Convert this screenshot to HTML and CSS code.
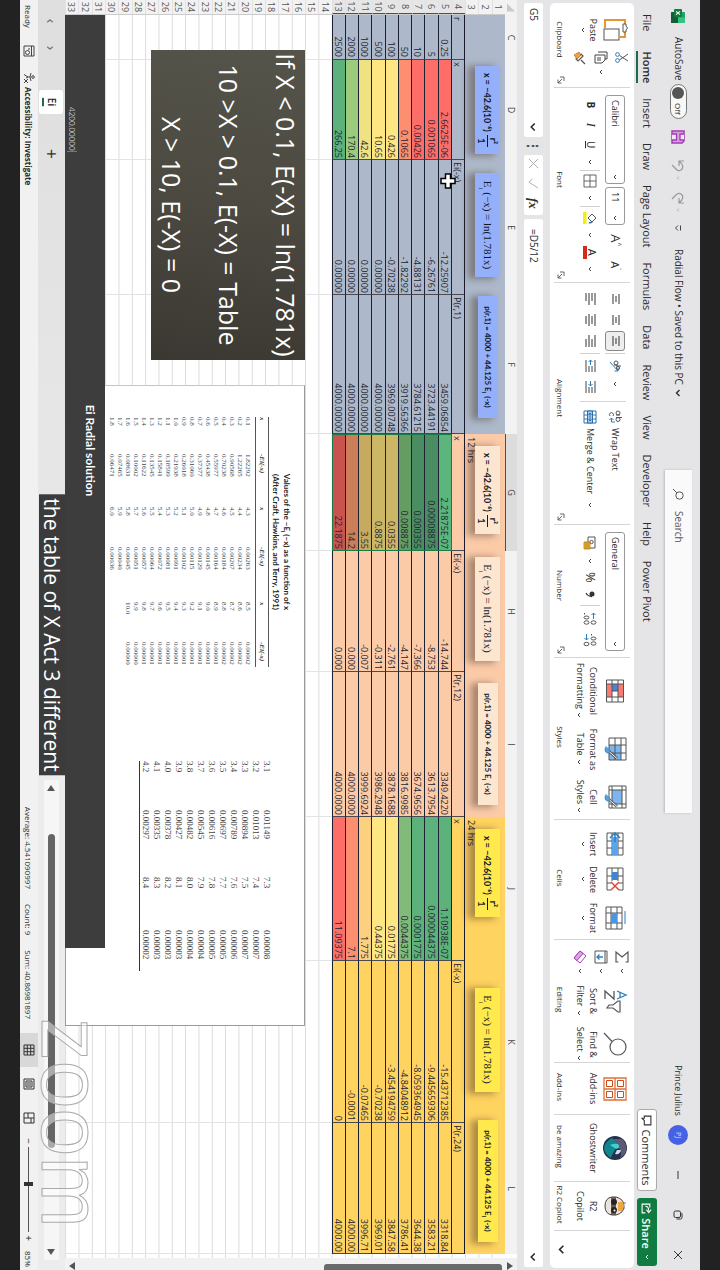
FILE: index.html
```html
<!DOCTYPE html>
<html lang="en">
<head>
<meta charset="utf-8">
<title>Radial Flow</title>
<link rel="stylesheet" href="styles.css">
</head>
<body>
<svg class="defs" aria-hidden="true">
  <symbol id="chev" viewBox="0 0 8 8"><path d="M2 3 4 5 6 3" fill="none" stroke="currentColor" stroke-width=".9"/></symbol>
  <symbol id="launch" viewBox="0 0 8 8"><path d="M1 5V1H5M3 3 7 7M7 3.500V7H3.500" fill="none" stroke="#555" stroke-width=".9"/></symbol>
  <symbol id="lines-a" viewBox="0 0 14 14"><path d="M2 3H12M4 6H10M2 9H12" stroke="#444" stroke-width="1.100"/></symbol>
  <symbol id="lines-l" viewBox="0 0 14 14"><path d="M1 2H13M1 5H9M1 8H13M1 11H9" stroke="#444" stroke-width="1.100"/></symbol>
  <symbol id="lines-c" viewBox="0 0 14 14"><path d="M1 2H13M3 5H11M1 8H13M3 11H11" stroke="#444" stroke-width="1.100"/></symbol>
  <symbol id="lines-r" viewBox="0 0 14 14"><path d="M1 2H13M5 5H13M1 8H13M5 11H13" stroke="#444" stroke-width="1.100"/></symbol>
  <symbol id="brush" viewBox="0 0 14 14"><path d="M13 1 6 9" stroke="#555" stroke-width="2.600"/><path d="M13 1 6 9" stroke="#fff" stroke-width="1"/><path d="M6 8C3 8 3 11 1 12 4 14 8 13 7.500 9.500Z" fill="#5aa0dc" stroke="#2a6ea8" stroke-width=".6"/></symbol>
</svg>
<div class="screen">
<div class="stage">
  <div class="strip"></div>

  <header class="titlebar">
    <svg class="app" viewBox="0 0 14 14"><rect x="3" width="11" height="14" rx="1" fill="#21a366"/><path d="M8.500 0H13a1 1 0 0 1 1 1V7H8.500Z" fill="#33c481"/><path d="M3 7H14V14H4a1 1 0 0 1-1-1Z" fill="#185c37"/><rect y="3" width="8" height="8" rx="1" fill="#107c41"/><path d="M2.300 5 5.700 9M5.700 5 2.300 9" stroke="#fff" stroke-width="1.100"/></svg>
    <label for="autosave" class="autosave">AutoSave</label>
    <span class="toggle"><input type="checkbox" id="autosave"><span>Off</span></span>
    <button class="save" aria-label="Save"><svg viewBox="0 0 14 14"><path d="M1 1H11L13 3V13H1Z" fill="#d9a0e0" stroke="#a13cb4" stroke-width="1.500"/><path d="M4 1V5H10V1M4 13V8.500H10V13" fill="#f4eaf6" stroke="#a13cb4" stroke-width="1.300"/></svg></button>
    <button class="undo" aria-label="Undo"><svg viewBox="0 0 14 14"><path d="M2 1V6H7M2 6C5 2 9 1 11 4S10 9 6 13" fill="none" stroke="#999" stroke-width="1.200"/></svg><svg class="c"><use href="#chev"/></svg></button>
    <button class="undo" aria-label="Redo"><svg viewBox="0 0 14 14"><path d="M12 1V6H7M12 6C9 2 5 1 3 4S4 9 8 13" fill="none" stroke="#999" stroke-width="1.200"/></svg><svg class="c"><use href="#chev"/></svg></button>
    <button class="more" aria-label="Customize toolbar"><svg viewBox="0 0 8 8"><path d="M1.500 1.500H6.500M1.500 4 4 6.500 6.500 4" fill="none" stroke="#444"/></svg></button>
    <button class="doc">Radial Flow • Saved to this PC <svg class="c"><use href="#chev"/></svg></button>
    <label class="search"><svg viewBox="0 0 12 12"><circle cx="7.500" cy="4.500" r="3.700" fill="none" stroke="#555"/><path d="M4.800 7.200 1 11" stroke="#555"/></svg><input type="search" placeholder="Search" aria-label="Search"></label>
    <span class="user">Prince Julius</span><span class="avatar">PJ</span>
    <button class="win" aria-label="Minimize"><svg viewBox="0 0 10 10"><path d="M1 5H9" stroke="#333"/></svg></button>
    <button class="win" aria-label="Restore"><svg viewBox="0 0 10 10"><rect x="1" y="2.500" width="6.500" height="6.500" rx="1.500" fill="none" stroke="#333"/><path d="M3 1.500Q3 1 4 1H7.500Q9 1 9 2.500V6.500" fill="none" stroke="#333"/></svg></button>
    <button class="win" aria-label="Close"><svg viewBox="0 0 10 10"><path d="M1 1 9 9M9 1 1 9" stroke="#333"/></svg></button>
  </header>

  <nav class="tabs">
    <a href="#">File</a><a href="#" class="on">Home</a><a href="#">Insert</a><a href="#">Draw</a><a href="#">Page Layout</a><a href="#">Formulas</a><a href="#">Data</a><a href="#">Review</a><a href="#">View</a><a href="#">Developer</a><a href="#">Help</a><a href="#">Power Pivot</a>
    <button class="comments"><svg viewBox="0 0 10 10"><path d="M1 1H9V7H5L3 9V7H1Z" fill="none" stroke="#333"/></svg>Comments</button>
    <button class="share"><svg viewBox="0 0 10 10"><path d="M4 2H1V9H9V6M3 6C3 4 5 3 7 3M6 .8 8.800 3 6 5" fill="none" stroke="#fff"/></svg>Share<svg class="c"><use href="#chev"/></svg></button>
  </nav>

  <section class="ribbon">
    <div class="group">
      <div class="tools clip">
        <button class="big"><svg viewBox="0 0 24 26"><path d="M6 3H2V23H10M14 3H19V8" fill="none" stroke="#e8952e" stroke-width="2"/><path d="M6 5V2H8Q10-1 12 2H14V5Z" fill="#fff" stroke="#555"/><rect x="11" y="9" width="11" height="15" fill="#fff" stroke="#555"/></svg><span>Paste</span><svg class="c"><use href="#chev"/></svg></button>
        <div class="stack">
          <button aria-label="Cut"><svg viewBox="0 0 14 14"><path d="M3 1 9 9.500M10 1 4.500 9.500" stroke="#555"/><circle cx="3.500" cy="11.500" r="1.900" fill="none" stroke="#2a7fc0"/><circle cx="9.500" cy="11.500" r="1.900" fill="none" stroke="#2a7fc0"/></svg></button>
          <button aria-label="Copy"><svg viewBox="0 0 14 14"><path d="M1 10V1H8V3" fill="none" stroke="#444"/><path d="M4 3H9L12 6V13H4Z" fill="#fff" stroke="#444"/><path d="M6 8H10M6 10H10" stroke="#444"/></svg><svg class="c"><use href="#chev"/></svg></button>
          <button aria-label="Format Painter"><svg viewBox="0 0 14 14"><path d="M13 2 9 6M5 4 10 9 8 11 3 6Z" fill="#fff" stroke="#555" stroke-width="1.200"/><path d="M4 6 8 10 4 13 1 8Z" fill="#f0a040" stroke="#a8620f" stroke-width=".6"/></svg></button>
        </div>
      </div>
      <footer><span>Clipboard</span><svg><use href="#launch"/></svg></footer>
    </div>
    <div class="group">
      <div class="tools rows">
        <div class="row font1"><span class="pick name"><select aria-label="Font"><option>Calibri</option></select><svg class="c"><use href="#chev"/></svg></span><span class="pick size"><select aria-label="Font size"><option>11</option></select><svg class="c"><use href="#chev"/></svg></span><button class="grow">A<sup>^</sup></button><button class="grow sm">A<sup>˅</sup></button></div>
        <div class="row font2"><button class="b">B</button><button class="i">I</button><button class="u">U</button><svg class="c"><use href="#chev"/></svg><hr>
          <button aria-label="Borders"><svg viewBox="0 0 14 14"><path d="M1 1H13V13H1ZM7 1V13M1 7H13" fill="none" stroke="#666"/></svg></button><svg class="c"><use href="#chev"/></svg><hr>
          <button aria-label="Fill color"><svg viewBox="0 0 14 14"><path d="M3 5 7 1 11 5 7 9Z" fill="#fff" stroke="#555"/><path d="M11 4Q13.500 7 12 8.500 10 8 11 4" fill="#2a6ea8"/><path d="M1 10.500H13V14H1Z" fill="#f4ee10"/></svg></button><svg class="c"><use href="#chev"/></svg>
          <button aria-label="Font color"><span class="ink">A</span></button><svg class="c"><use href="#chev"/></svg></div>
      </div>
      <footer><span>Font</span><svg><use href="#launch"/></svg></footer>
    </div>
    <div class="group">
      <div class="tools split">
        <div class="rows">
          <div class="row"><button aria-label="Top"><svg><use href="#lines-a"/></svg></button><button aria-label="Middle"><svg><use href="#lines-a"/></svg></button><button class="boxed" aria-label="Bottom"><svg><use href="#lines-a"/></svg></button><hr><button aria-label="Orientation"><svg viewBox="0 0 14 14"><path d="M3 12 12 4M12 7.500V4H8.500" fill="none" stroke="#2a7fc0"/><circle cx="4" cy="6" r="2" fill="none" stroke="#555"/><path d="M6 4V8M7 1V6" stroke="#555"/><circle cx="9" cy="4" r="1.600" fill="none" stroke="#555"/></svg></button><svg class="c"><use href="#chev"/></svg></div>
          <div class="row"><button aria-label="Left"><svg><use href="#lines-l"/></svg></button><button aria-label="Center"><svg><use href="#lines-c"/></svg></button><button aria-label="Right"><svg><use href="#lines-r"/></svg></button><hr><button aria-label="Outdent"><svg viewBox="0 0 14 14"><path d="M1 2H13M7 5H13M7 8H13M1 11H13" stroke="#444"/><path d="M6 6.500H1M3 4.500 1 6.500 3 8.500" fill="none" stroke="#2a7fc0"/></svg></button><button aria-label="Indent"><svg viewBox="0 0 14 14"><path d="M1 2H13M7 5H13M7 8H13M1 11H13" stroke="#444"/><path d="M1 6.500H6M4 4.500 6 6.500 4 8.500" fill="none" stroke="#2a7fc0"/></svg></button></div>
        </div>
        <div class="rows wrap">
          <div class="row"><button class="text"><svg viewBox="0 0 14 14"><circle cx="3" cy="4" r="2" fill="none" stroke="#555"/><path d="M5 2V6M7.500 0V6M6 9A2 2 0 1 0 6 12" fill="none" stroke="#555"/><circle cx="9.500" cy="4" r="2" fill="none" stroke="#555"/><path d="M12 7V10.500H8M10 8.500 8 10.500 10 12.500" fill="none" stroke="#2a7fc0"/></svg>Wrap Text</button></div>
          <div class="row"><button class="text"><svg viewBox="0 0 14 14"><path d="M1 1H13V13H1Z" fill="#fff" stroke="#2a6ea8"/><path d="M1 4.500H13V9.500H1Z" fill="#9fcdf2" stroke="#2a6ea8"/><path d="M5 1V4M9 1V4M5 10V13M9 10V13M3 7H11M5 5.500 3 7 5 8.500M9 5.500 11 7 9 8.500" fill="none" stroke="#2a6ea8" stroke-width=".9"/></svg>Merge &amp; Center</button><svg class="c"><use href="#chev"/></svg></div>
        </div>
      </div>
      <footer><span>Alignment</span><svg><use href="#launch"/></svg></footer>
    </div>
    <div class="group">
      <div class="tools rows">
        <div class="row"><span class="pick wide"><select aria-label="Number format"><option>General</option></select><svg class="c"><use href="#chev"/></svg></span></div>
        <div class="row num"><button aria-label="Accounting"><svg viewBox="0 0 14 14"><path d="M1 2H12V9H1Z" fill="#fff" stroke="#555"/><circle cx="6" cy="5.500" r="1.700" fill="none" stroke="#555"/><path d="M6 7H13V13H6Z" fill="#f2b233" stroke="#a8720f" stroke-width=".7"/><path d="M6 9H13M6 11H13" stroke="#a8720f" stroke-width=".7"/></svg></button><svg class="c"><use href="#chev"/></svg><button class="pct">%</button><button aria-label="Comma style"><svg class="comma" viewBox="0 0 8 14"><circle cx="4" cy="5" r="2.500" fill="#333"/><path d="M6.500 5Q6.500 9 3 11" fill="none" stroke="#333" stroke-width="1.300"/></svg></button><hr>
          <button aria-label="Increase decimal"><svg viewBox="0 0 14 14"><path d="M7 3.500H1M3 1.500 1 3.500 3 5.500" fill="none" stroke="#2a7fc0"/><ellipse cx="10.500" cy="3.500" rx="1.700" ry="2.500" fill="none" stroke="#555"/><ellipse cx="5.500" cy="10.500" rx="1.500" ry="2.500" fill="none" stroke="#555"/><ellipse cx="10.500" cy="10.500" rx="1.700" ry="2.500" fill="none" stroke="#555"/><path d="M1 12.500H2.500" stroke="#555"/></svg></button>
          <button aria-label="Decrease decimal"><svg viewBox="0 0 14 14"><ellipse cx="5.500" cy="3.500" rx="1.500" ry="2.500" fill="none" stroke="#555"/><ellipse cx="10.500" cy="3.500" rx="1.700" ry="2.500" fill="none" stroke="#555"/><path d="M1 10.500H7M5 8.500 7 10.500 5 12.500" fill="none" stroke="#2a7fc0"/><ellipse cx="11" cy="10.500" rx="1.700" ry="2.500" fill="none" stroke="#555"/><path d="M1 5.500H2.500" stroke="#555"/></svg></button></div>
      </div>
      <footer><span>Number</span><svg><use href="#launch"/></svg></footer>
    </div>
    <div class="group">
      <div class="tools">
        <button class="big"><svg viewBox="0 0 24 18"><rect x="1" y="0" width="22" height="18" fill="#fff"/><path d="M5 0H18V6H5ZM5 12H18V18H5Z" fill="#f87b76"/><path d="M5 6H12V12H5Z" fill="#4b84d6"/><path d="M1 0.500H23V17.500H1ZM5 0V18M18 0V18M1 6H23M1 12H23M12 6V12" fill="none" stroke="#555"/></svg><span>Conditional<br>Formatting <svg class="c"><use href="#chev"/></svg></span></button>
        <button class="big"><svg viewBox="0 0 24 24"><path d="M8 6H23V18H8Z" fill="#7db6ee"/><path d="M1 1H23V18H1ZM1 6H23M1 12H23M8 1V18M16 1V18" fill="none" stroke="#555"/><use href="#brush" x="8" y="9" width="15" height="14"/></svg><span>Format as<br>Table <svg class="c"><use href="#chev"/></svg></span></button>
        <button class="big"><svg viewBox="0 0 24 24"><path d="M5 5H19V15H5Z" fill="#7db6ee"/><path d="M1 1H23V18H1ZM1 5H23M5 1V18M19 1V18M1 15H23" fill="none" stroke="#555"/><use href="#brush" x="8" y="9" width="15" height="14"/></svg><span>Cell<br>Styles <svg class="c"><use href="#chev"/></svg></span></button>
      </div>
      <footer><span>Styles</span></footer>
    </div>
    <div class="group">
      <div class="tools cells">
        <button class="big"><svg viewBox="0 0 24 18"><path d="M1 1H23V17H1ZM9 1V17M16 1V17M1 6H23M1 12H23" fill="#fff" stroke="#555"/><path d="M5 6H23V12H5Z" fill="#5aa5ea"/><path d="M6 4 1 9 6 14M1 9H10" fill="none" stroke="#2a7fc0" stroke-width="1.500"/></svg><span>Insert</span><svg class="c"><use href="#chev"/></svg></button>
        <button class="big"><svg viewBox="0 0 24 18"><path d="M1 1H23V17H1ZM9 1V17M16 1V17M1 6H23M1 12H23" fill="#fff" stroke="#555"/><path d="M5 6H13V12H5Z" fill="#3f86d2"/><path d="M14 5H24V13H14Z" fill="#fff"/><path d="M15 5 23 13M23 5 15 13" stroke="#e0443e" stroke-width="1.500"/></svg><span>Delete</span><svg class="c"><use href="#chev"/></svg></button>
        <button class="big"><svg viewBox="0 0 24 22"><path d="M5 1H18" stroke="#2a7fc0"/><path d="M1 4H23V20H1ZM7 4V20M17 4V20M1 9H23M1 15H23" fill="#fff" stroke="#555"/><path d="M7 9H17V15H7Z" fill="#4b95e4"/></svg><span>Format</span><svg class="c"><use href="#chev"/></svg></button>
      </div>
      <footer><span>Cells</span></footer>
    </div>
    <div class="group">
      <div class="tools edit">
        <div class="stack">
          <button aria-label="AutoSum"><svg viewBox="0 0 14 14"><path d="M12 3.500V1H2L7 7 2 13H12V10.500" fill="none" stroke="#555" stroke-width="1.200"/></svg><svg class="c"><use href="#chev"/></svg></button>
          <button aria-label="Fill"><svg viewBox="0 0 14 14"><path d="M1 1H13V13H1ZM1 3H13" fill="none" stroke="#555"/><path d="M7 5V11M4.500 8.500 7 11 9.500 8.500" fill="none" stroke="#2a7fc0" stroke-width="1.300"/></svg><svg class="c"><use href="#chev"/></svg></button>
          <button aria-label="Clear"><svg viewBox="0 0 14 14"><path d="M6 1 13 7 8 13 1 7Z" fill="#fff" stroke="#a13cb4"/><path d="M3.500 4 10.500 10 8 13 1 7Z" fill="#dca5e4" stroke="#a13cb4"/></svg><svg class="c"><use href="#chev"/></svg></button>
        </div>
        <button class="big"><svg viewBox="0 0 24 24"><path d="M2 10 6 1 10 10M3.500 7H8.500" fill="none" stroke="#2a7fc0" stroke-width="1.300"/><path d="M2 13H10L2 22H10" fill="none" stroke="#555" stroke-width="1.300"/><path d="M12 7H23V9L19 14V20L16 18V14L12 9Z" fill="none" stroke="#555" stroke-width="1.200"/></svg><span>Sort &amp;<br>Filter <svg class="c"><use href="#chev"/></svg></span></button>
        <button class="big"><svg viewBox="0 0 24 24"><circle cx="15" cy="9" r="8" fill="none" stroke="#555" stroke-width="1.200"/><path d="M9.500 15 1 23" stroke="#555" stroke-width="1.200"/></svg><span>Find &amp;<br>Select <svg class="c"><use href="#chev"/></svg></span></button>
      </div>
      <footer><span>Editing</span></footer>
    </div>
    <div class="group">
      <div class="tools"><button class="big"><svg viewBox="0 0 24 24"><path d="M1 1H23V23H1ZM12 1V23M1 12H23" fill="none" stroke="#e07038" stroke-width="1.300"/><path d="M3.500 3.500H9.500V9.500H3.500ZM14.500 3.500H20.500V9.500H14.500ZM3.500 14.500H9.500V20.500H3.500ZM14.500 14.500H20.500V20.500H14.500Z" fill="#fff" stroke="#c8501c"/></svg><span>Add-ins</span></button></div>
      <footer><span>Add-ins</span></footer>
    </div>
    <div class="group">
      <div class="tools"><button class="big"><svg viewBox="0 0 24 24"><circle cx="12" cy="12" r="12" fill="#25304f"/><path d="M3 5Q10-2 18 2L22 7Q14 4 11 10L3 14Z" fill="#5d5a78"/><path d="M2 15Q8 8 14 12T22 16Q18 23 11 23 5 21 2 15Z" fill="#12868f"/><path d="M8 9Q12 6 13 11L9 17Q7 13 8 9Z" fill="#3fd0cf"/><path d="M14 6Q19 7 18 12L14 10Z" fill="#d6dcec"/></svg><span>Ghostwriter</span></button></div>
      <footer><span>be amazing</span></footer>
    </div>
    <div class="group">
      <div class="tools"><button class="big"><svg viewBox="0 0 24 24"><path d="M9 1V5M14 2V5" stroke="#777"/><path d="M3 11Q5 3 12 3T21 11V15Q20 22 12 22T3 15Z" fill="#e9e4de" stroke="#4a403c"/><path d="M8 4Q13 2 17 5V9H8Z" fill="#eda744"/><path d="M3 11H21V16H3Z" fill="#6a5a56"/><circle cx="8" cy="13" r="3" fill="#2a2222"/><circle cx="16" cy="13" r="3" fill="#2a2222"/><circle cx="16.500" cy="12.500" r="1" fill="#fff"/></svg><span>R2<br>Copilot</span></button></div>
      <footer><span>R2 Copilot</span></footer>
    </div>
    <button class="fold" aria-label="Collapse ribbon"><svg class="c"><use href="#chev"/></svg></button>
  </section>

  <section class="formula">
    <label class="cellname"><input value="G5" aria-label="Name box"><svg class="c"><use href="#chev"/></svg></label>
    <span class="dots">⋮</span>
    <span class="fx"><svg viewBox="0 0 12 12"><path d="M1 1 11 11M11 1 1 11" stroke="#aaa"/></svg><svg viewBox="0 0 12 12"><path d="M1 7 4.500 11 11 1" fill="none" stroke="#aaa"/></svg><i>fx</i></span>
    <label class="expr"><input value="=D5/12" aria-label="Formula"><svg class="c"><use href="#chev"/></svg></label>
  </section>

  <main class="sheet">
    <div class="heads cols"><span>C</span><span>D</span><span>E</span><span>F</span><span class="sel">G</span><span>H</span><span>I</span><span>J</span><span>K</span><span>L</span></div>
    <svg class="corner" viewBox="0 0 8 8"><path d="M8 0V8H0Z" fill="#c9c9c9"/></svg>
    <div class="nums"><span>1</span><span>2</span><span>3</span><span class="s">4</span><span class="s">5</span><span class="s">6</span><span class="s">7</span><span class="s">8</span><span class="s">9</span><span class="s">10</span><span class="s">11</span><span class="s">12</span><span class="s">13</span><span>14</span><span>15</span><span>16</span><span>17</span><span>18</span><span>19</span><span>20</span><span>21</span><span>22</span><span>23</span><span>24</span><span>25</span><span>26</span><span>27</span><span>28</span><span>29</span><span>30</span><span>31</span><span>32</span><span>33</span></div>
    <div class="lines"></div>
    <div class="vlines cols"><i></i><i></i><i></i><i></i><i></i><i></i><i></i><i></i><i></i><i></i></div>

    <div class="band blue"></div><div class="band peach"></div><div class="band gold"></div>
    <div class="cards blue-cards">
      <div class="card eq">x = −42.6(10⁻⁶) <span class="frac"><span>r²</span><span>1</span></span></div>
      <div class="card ei">E<sub>i</sub> (−x) = ln(1.781x)</div>
      <div class="card pr">p(r,1) = 4000 + 44.125 E<sub>i</sub> (-x)</div>
    </div>
    <div class="cards peach-cards">
      <div class="card eq">x = −42.6(10⁻⁶) <span class="frac"><span>r²</span><span>1</span></span></div>
      <div class="card ei">E<sub>i</sub> (−x) = ln(1.781x)</div>
      <div class="card pr">p(r,1) = 4000 + 44.125 E<sub>i</sub> (-x)</div>
    </div>
    <div class="cards gold-cards">
      <div class="card eq">x = −42.6(10⁻⁶) <span class="frac"><span>r²</span><span>1</span></span></div>
      <div class="card ei">E<sub>i</sub> (−x) = ln(1.781x)</div>
      <div class="card pr">p(r,1) = 4000 + 44.125 E<sub>i</sub> (-x)</div>
    </div>
    <span class="hours h12">12 hrs</span><span class="hours h24">24 hrs</span>

    <table class="data">
      <thead><tr class="cols"><th>r</th><th>x</th><th>Ei(-x)</th><th>P(r,1)</th><th>x</th><th>Ei(-x)</th><th>P(r,12)</th><th>x</th><th>Ei(-x)</th><th>P(r,24)</th></tr></thead>
      <tbody>
        <tr class="cols"><td>0.25</td><td class="red">2.6625E-06</td><td>-12.25907</td><td>3459.06854</td><td class="active">2.21875E-07</td><td>-14.744</td><td>3349.4220</td><td class="green">1.10938E-07</td><td>-15.43712385</td><td>3318.84</td></tr>
        <tr class="cols"><td>5</td><td class="red">0.001065</td><td>-6.26761</td><td>3723.44191</td><td class="dgreen">0.00008875</td><td>-8.753</td><td>3613.7954</td><td class="green">0.000044375</td><td>-9.445659306</td><td>3583.21</td></tr>
        <tr class="cols"><td>10</td><td class="red">0.00426</td><td>-4.88131</td><td>3784.61215</td><td class="dgreen">0.000355</td><td>-7.366</td><td>3674.9656</td><td class="green">0.0001775</td><td>-8.059364945</td><td>3644.38</td></tr>
        <tr class="cols"><td>50</td><td class="orange">0.1065</td><td>-1.82292</td><td>3919.56366</td><td class="dlime">0.008875</td><td>-4.147</td><td>3816.9985</td><td class="moss">0.0044375</td><td>-4.84048912</td><td>3786.41</td></tr>
        <tr class="cols"><td>100</td><td class="yellow">0.426</td><td>-0.70238</td><td>3969.00748</td><td class="dyellow">0.0355</td><td>-2.761</td><td>3878.1688</td><td class="yellow">0.01775</td><td>-3.454194759</td><td>3847.58</td></tr>
        <tr class="cols"><td>500</td><td class="yellow">10.65</td><td>0.00000</td><td>4000.00000</td><td class="dyellow">0.8875</td><td>-0.311</td><td>3986.2948</td><td class="yellow">0.44375</td><td>-0.70238</td><td>3969.01</td></tr>
        <tr class="cols"><td>1000</td><td class="pale">42.6</td><td>0.00000</td><td>4000.00000</td><td class="dsand">3.55</td><td>-0.007</td><td>3999.6924</td><td class="sand">1.775</td><td>-0.07465</td><td>3996.71</td></tr>
        <tr class="cols"><td>2000</td><td class="lime">170.4</td><td>0.00000</td><td>4000.00000</td><td class="dorange">14.2</td><td>0.000</td><td>4000.0000</td><td class="orange">7.1</td><td>-0.0001</td><td>4000.00</td></tr>
        <tr class="cols"><td>2500</td><td class="green">266.25</td><td>0.00000</td><td>4000.00000</td><td class="dred">22.1875</td><td>0.000</td><td>4000.0000</td><td class="red">11.09375</td><td>0</td><td>4000.00</td></tr>
      </tbody>
    </table>
    <div class="selection"></div>
    <svg class="cursor" viewBox="0 0 16 16"><path d="M5.500 1H10.500V5.500H15V10.500H10.500V15H5.500V10.500H1V5.500H5.500Z" fill="#fff" stroke="#000" stroke-width="1.500"/></svg>

    <div class="note"><p>If X &lt; 0.1, E(-X) = ln(1.781x)</p><p>10 &gt;X &gt; 0.1, E(-X) = Table</p><p>X &gt; 10, E(-X) = 0</p></div>

    <div class="sheetpic">
      <div class="left">
        <h2>Values of the −E<sub>i</sub> (−x) as a function of x<br>(After Craft, Hawkins, and Terry, 1991)</h2>
        <table class="values">
          <colgroup><col class="w37"><col class="w53"><col class="w40"><col class="w55"><col class="w40"><col></colgroup>
          <thead><tr><th>x</th><th>-Ei(-x)</th><th>x</th><th>-Ei(-x)</th><th>x</th><th>-Ei(-x)</th></tr></thead>
          <tbody>
            <tr><td>0.1</td><td>1.82292</td><td>4.3</td><td>0.00263</td><td>8.5</td><td>0.00002</td></tr>
            <tr><td>0.2</td><td>1.22265</td><td>4.4</td><td>0.00234</td><td>8.6</td><td>0.00002</td></tr>
            <tr><td>0.3</td><td>0.90568</td><td>4.5</td><td>0.00207</td><td>8.7</td><td>0.00002</td></tr>
            <tr><td>0.4</td><td>0.70238</td><td>4.6</td><td>0.00184</td><td>8.8</td><td>0.00002</td></tr>
            <tr><td>0.5</td><td>0.55977</td><td>4.7</td><td>0.00164</td><td>8.9</td><td>0.00001</td></tr>
            <tr><td>0.6</td><td>0.45438</td><td>4.8</td><td>0.00145</td><td>9.0</td><td>0.00001</td></tr>
            <tr><td>0.7</td><td>0.37377</td><td>4.9</td><td>0.00129</td><td>9.1</td><td>0.00001</td></tr>
            <tr><td>0.8</td><td>0.31060</td><td>5.0</td><td>0.00115</td><td>9.2</td><td>0.00001</td></tr>
            <tr><td>0.9</td><td>0.26018</td><td>5.1</td><td>0.00102</td><td>9.3</td><td>0.00001</td></tr>
            <tr><td>1.0</td><td>0.21938</td><td>5.2</td><td>0.00091</td><td>9.4</td><td>0.00001</td></tr>
            <tr><td>1.1</td><td>0.18599</td><td>5.3</td><td>0.00081</td><td>9.5</td><td>0.00001</td></tr>
            <tr><td>1.2</td><td>0.15841</td><td>5.4</td><td>0.00072</td><td>9.6</td><td>0.00001</td></tr>
            <tr><td>1.3</td><td>0.13545</td><td>5.5</td><td>0.00064</td><td>9.7</td><td>0.00001</td></tr>
            <tr><td>1.4</td><td>0.11622</td><td>5.6</td><td>0.00057</td><td>9.8</td><td>0.00001</td></tr>
            <tr><td>1.5</td><td>0.10002</td><td>5.7</td><td>0.00051</td><td>9.9</td><td>0.00000</td></tr>
            <tr><td>1.6</td><td>0.08631</td><td>5.8</td><td>0.00045</td><td>10.0</td><td>0.00000</td></tr>
            <tr><td>1.7</td><td>0.07465</td><td>5.9</td><td>0.00040</td><td></td><td></td></tr>
            <tr><td>1.8</td><td>0.06471</td><td>6.0</td><td>0.00036</td><td></td><td></td></tr>
          </tbody>
        </table>
      </div>
      <table class="more-values">
        <tbody>
          <tr><td>3.1</td><td>0.01149</td><td>7.3</td><td>0.00008</td></tr>
          <tr><td>3.2</td><td>0.01013</td><td>7.4</td><td>0.00007</td></tr>
          <tr><td>3.3</td><td>0.00894</td><td>7.5</td><td>0.00007</td></tr>
          <tr><td>3.4</td><td>0.00789</td><td>7.6</td><td>0.00006</td></tr>
          <tr><td>3.5</td><td>0.00697</td><td>7.7</td><td>0.00005</td></tr>
          <tr><td>3.6</td><td>0.00616</td><td>7.8</td><td>0.00005</td></tr>
          <tr><td>3.7</td><td>0.00545</td><td>7.9</td><td>0.00004</td></tr>
          <tr><td>3.8</td><td>0.00482</td><td>8.0</td><td>0.00004</td></tr>
          <tr><td>3.9</td><td>0.00427</td><td>8.1</td><td>0.00003</td></tr>
          <tr><td>4.0</td><td>0.00378</td><td>8.2</td><td>0.00003</td></tr>
          <tr><td>4.1</td><td>0.00335</td><td>8.3</td><td>0.00003</td></tr>
          <tr><td>4.2</td><td>0.00297</td><td>8.4</td><td>0.00002</td></tr>
        </tbody>
      </table>
    </div>
    <div class="chart"><h2>Ei Radial solution</h2><span>4200.00000</span></div>
    <div class="vscroll"><svg viewBox="0 0 8 8"><path d="M4 1 8 7H0Z" fill="#555"/></svg><i></i><svg viewBox="0 0 8 8"><path d="M4 7 8 1H0Z" fill="#555"/></svg></div>
  </main>

  <div class="sheetbar">
    <button aria-label="Previous sheet">‹</button><button aria-label="Next sheet">›</button><button class="tab">Ei</button><button class="add" aria-label="New sheet">+</button>
    <div class="hscroll"><svg viewBox="0 0 8 8"><path d="M1 4 7 0V8Z" fill="#555"/></svg><i></i><svg viewBox="0 0 8 8"><path d="M7 4 1 0V8Z" fill="#555"/></svg></div>
  </div>

  <footer class="status">
    <span>Ready</span>
    <svg viewBox="0 0 12 12"><path d="M1 1H11V11H1ZM1 3.500H11M3 6H5" fill="none" stroke="#444"/><circle cx="7.500" cy="7.500" r="2" fill="none" stroke="#444"/></svg>
    <svg viewBox="0 0 12 12"><circle cx="5" cy="2" r="1.300" fill="none" stroke="#444"/><path d="M1 4 5 5 9 4M5 5V7L2.500 11M5 7 6 9M7 7 11 11M11 7 7 11" fill="none" stroke="#444"/></svg>
    <b>Accessibility: Investigate</b>
    <div class="sums"><span>Average: 4.541090997</span><span>Count: 9</span><span>Sum: 40.86981897</span></div>
    <button class="view on" aria-label="Normal"><svg viewBox="0 0 12 12"><path d="M1 1H11V11H1ZM4.300 1V11M7.700 1V11M1 4.300H11M1 7.700H11" fill="none" stroke="#333"/></svg></button>
    <button class="view" aria-label="Page layout"><svg viewBox="0 0 12 12"><path d="M1 1H11V11H1ZM3 3H9V9H3ZM4 5H8M4 7H8" fill="none" stroke="#333"/></svg></button>
    <button class="view" aria-label="Page break"><svg viewBox="0 0 12 12"><path d="M1 1H11V11H1ZM1 7H6V1M6 7V11M6 4H11" fill="none" stroke="#333"/></svg></button>
    <span class="pm">−</span><input type="range" aria-label="Zoom" min="10" max="160" value="75"><span class="pm">+</span><span class="pc">85%</span>
  </footer>
  <div class="strip"></div>

  <div class="caption">the table of X Act 3 different</div>
  <div class="zoommark">zoom</div>
</div>
</div>
</body>
</html>
```

FILE: styles.css
```css
* { box-sizing: border-box; }
html, body { margin: 0; height: 100%; background: #222; }
.defs { display: none; }
.screen { width: 100%; height: 100%; overflow: hidden; }

/* The window is turned a quarter clockwise. */
.stage {
  --cols: 45fr 100fr 135fr 139fr 117fr 121fr 145fr 144fr 162fr 131fr;
  position: relative;
  display: flex;
  flex-direction: column;
  width: 100vh;
  height: 100vw;
  transform-origin: 0 0;
  transform: rotate(90deg) translateY(-100%);
  background: #e5e5e8;
  color: #2c2c2c;
  font: 9px/13px "Open Sans", "Noto Sans", sans-serif;
  overflow: hidden;
  white-space: nowrap;
}
.strip { flex: 0 0 20px; background: #222; }
button, input, select { font: inherit; color: inherit; background: none; border: 0; margin: 0; padding: 0; }
button { display: flex; align-items: center; justify-content: center; }
select { appearance: none; flex: 1; min-width: 0; padding-left: 4px; }
input:focus { outline: none; }
svg { display: block; width: 14px; height: 14px; flex: none; }
svg.c { width: 8px; height: 8px; }
hr { width: 1px; height: 20px; margin: 0; border: 0; background: #d0d0d0; }

/* Title bar */
.titlebar { flex: 0 0 43px; display: flex; align-items: center; padding: 0 10px 0 9px; font-size: 10px; }
.autosave { margin-left: 14px; width: 47px; }
.toggle { display: flex; align-items: center; gap: 4px; width: 35px; height: 17px; padding-left: 2px; border: 1px solid #777; border-radius: 9px; background: #f8f8f8; font-size: 8px; }
.toggle input { appearance: none; width: 12px; height: 12px; border-radius: 50%; background: #555; }
.save { margin-left: 11px; }
.undo { width: 28px; margin-left: 12px; gap: 2px; color: #999; }
.undo + .undo { margin-left: 4px; }
.undo .c { width: 6px; }
.more { margin-left: 8px; }
.more svg { width: 8px; height: 8px; }
.doc { margin-left: 17px; gap: 2px; }
.doc .c { width: 12px; height: 12px; }
.search { display: flex; align-items: center; gap: 11px; width: 343px; height: 27px; margin-left: auto; padding-left: 18px; background: #fafafa; box-shadow: 0 1px 2px #bbb; }
.search svg { width: 12px; height: 12px; }
.search input { flex: 1; min-width: 0; }
.search input::placeholder { color: #555; opacity: 1; }
.user { margin-left: 252px; width: 60px; font-size: 9px; }
.avatar { width: 20px; height: 20px; border-radius: 50%; background: #4661e6; color: #dfe6ff; font-size: 7px; line-height: 20px; text-align: center; }
.win { margin-left: 25px; }
.win + .win { margin-left: 30px; }
.win svg { width: 10px; height: 10px; }

/* Ribbon tabs */
.tabs { flex: 0 0 23px; display: flex; align-items: flex-start; gap: 15px; padding: 0 4px 0 14px; font-size: 11px; line-height: 19px; }
.tabs a { color: inherit; text-decoration: none; }
.tabs .on { margin-left: 5px; border-bottom: 2px solid #1c6b4c; font-weight: 600; }
.comments, .share { height: 20px; gap: 4px; border-radius: 3px; }
.tabs button svg { width: 11px; height: 11px; }
.tabs button svg.c { width: 8px; height: 8px; }
.comments { width: 82px; margin-left: auto; background: #fff; border: 1px solid #aaa; }
.share { width: 68px; margin-left: -8px; background: #107c41; color: #fff; font-weight: 600; }

/* Ribbon */
.ribbon { flex: 0 0 82px; display: grid; grid-template-columns: 85fr 195fr 242fr 133fr 162fr 120fr 123fr 52fr 67fr 49fr 37fr; margin: 0 2px 0 3px; background: #fff; border-radius: 5px; }
.group { display: flex; flex-direction: column; min-width: 0; margin: 4px 0; border-right: 1px solid #d4d4d4; }
.group footer { flex: none; display: flex; justify-content: center; align-items: center; height: 14px; padding-right: 3px; font-size: 8px; }
.group footer span { flex: 1; text-align: center; }
.group footer svg { width: 8px; height: 8px; }
.tools { flex: 1; display: flex; justify-content: space-around; }
.rows { display: flex; flex-direction: column; gap: 4px; padding: 4px 6px 0 7px; justify-content: flex-start; }
.row { display: flex; align-items: center; height: 21px; gap: 7px; }
.big { flex-direction: column; justify-content: flex-start; align-items: center; padding-top: 2px; line-height: 13px; }
.big > svg:first-child { width: 24px; height: 26px; margin-bottom: 2px; }
.big span { text-align: center; }
.big span .c { display: inline-block; vertical-align: middle; }
.stack { display: flex; flex-direction: column; gap: 7px; padding-top: 1px; width: 28px; }
.stack button { justify-content: flex-start; gap: 3px; }
.clip { justify-content: flex-start; gap: 9px; padding-left: 15px; }
.cells { padding: 0 1px 0 7px; }
.edit { justify-content: flex-start; gap: 10px; padding-left: 10px; }
.pick { display: flex; align-items: center; height: 20px; padding-right: 2px; border: 1px solid #999; border-radius: 3px; background: #fff; }
.name { width: 96px; }
.size { width: 41px; }
.wide { width: 120px; }
.font1 { gap: 3px; }
.grow { width: 22px; font-size: 13px; margin-left: 2px; }
.grow sup { font-size: 7px; line-height: 7px; align-self: flex-start; }
.grow.sm { font-size: 11px; }
.font2 { gap: 0; }
.font2 button { width: 20px; height: 20px; }
.font2 > .c { margin: 0 3px; }
.font2 hr { margin: 0 1px; }
.b { font-weight: 700; font-size: 10px; }
.i { font: italic 12px "Liberation Serif", serif; }
.u { font-size: 10px; text-decoration: underline; }
.ink { height: 14px; width: 13px; border-bottom: 4px solid #d32a1a; font-size: 11px; line-height: 10px; }
.split { justify-content: flex-start; }
.split .rows { padding: 4px 7px 0 9px; }
.split hr { margin: 0 -2px; }
.boxed { width: 20px; height: 20px; margin: 0 -3px; border: 1px solid #888; border-radius: 3px; background: #eee; }
.split .wrap { padding: 0 8px; border-left: 1px solid #d4d4d4; margin: 4px 0 12px; }
.text { gap: 4px; }
.num { padding: 0 4px; justify-content: space-between; }
.pct { font-size: 13px; }
.comma { width: 8px; }
.fold { align-self: end; justify-self: center; height: 24px; }
.fold .c { width: 15px; height: 15px; }

/* Formula bar */
.formula { flex: 0 0 33px; display: flex; align-items: center; padding: 0 3px; font-size: 10px; }
.formula > label, .fx { display: flex; align-items: center; height: 19px; padding: 0 3px; background: #fff; border-radius: 2px; }
.formula input { flex: 1; min-width: 0; width: 20px; padding-left: 2px; }
.formula .c { width: 14px; height: 14px; }
.cellname { width: 134px; }
.dots { width: 18px; text-align: center; font-weight: 700; font-size: 12px; }
.fx { width: 60px; gap: 9px; }
.fx svg { width: 11px; height: 11px; }
.fx i { font: italic 700 13px "Liberation Serif", serif; }
.formula .expr { flex: 1; margin-left: 4px; padding-left: 8px; }

/* Sheet */
.sheet { flex: 1; min-height: 0; display: grid; grid-template-columns: 15px var(--cols) 16px; grid-template-rows: 12px repeat(33, minmax(0, 1fr)); background: #fff; color: #1c2430; }
.cols { display: grid; grid-template-columns: var(--cols); }
.heads { grid-area: 1 / 2 / 2 / 12; background: #f2f2f2; text-align: center; line-height: 11px; color: #444; font-size: 9px; }
.heads .sel { background: #dcdcdc; border-bottom: 1px solid #1c6b4c; }
.corner { grid-area: 1 / 1; width: 15px; height: 12px; padding: 2px; background: #f2f2f2; }
.nums { grid-area: 2 / 1 / 35 / 2; display: grid; grid-template-rows: repeat(33, minmax(0, 1fr)); background: #f2f2f2; color: #555; text-align: center; border-right: 1px solid #ccc; }
.nums span { border-bottom: 1px solid #e2e2e2; line-height: 13px; overflow: hidden; }
.nums .s { border-right: 1px solid #1c6b4c; background: #e6e6e6; }
.lines { grid-area: 2 / 2 / 35 / 13; background: linear-gradient(to top, #dadada 1px, transparent 1px) 0 0 / 100% calc(100% / 33); }
.vlines { grid-area: 2 / 2 / 35 / 12; }
.vlines i { border-right: 1px solid #dfe4e6; }
.band.blue { grid-area: 2 / 2 / 15 / 6; background: #adb9ca; }
.band.peach { grid-area: 2 / 6 / 15 / 9; background: #fbcba8; }
.band.gold { grid-area: 2 / 9 / 15 / 12; background: #ffd35f; }
.cards { display: flex; align-items: center; justify-content: space-between; padding: 0 12px 5px; }
.card { flex: none; height: 25px; display: flex; align-items: center; justify-content: center; gap: 3px; color: #101828; box-shadow: 1px 6px 7px 1px rgba(70, 50, 40, .45); }
.card sub { font-size: 6px; align-self: flex-end; line-height: 12px; margin-left: -3px; }
.blue-cards { grid-area: 2 / 2 / 5 / 6; padding-left: 51px; padding-right: 16px; }
.blue-cards .card { background: #94b0fb; }
.peach-cards { grid-area: 2 / 6 / 5 / 9; }
.peach-cards .card { background: #fde6cf; }
.gold-cards { grid-area: 2 / 9 / 5 / 12; }
.gold-cards .card { background: #ffe94c; }
.gold-cards .ei { margin-left: 42px; }
.eq { width: 88px; font: 700 9px/11px Lato, sans-serif; }
.frac { display: flex; flex-direction: column; text-align: center; }
.frac span:first-child { border-bottom: 1px solid; padding: 0 3px; }
.ei { width: 104px; font: 11px/12px "Liberation Serif", serif; }
.card.pr { width: 122px; height: 20px; font: 700 8px/10px Lato, sans-serif; }
.hours { line-height: 13px; padding-left: 3px; }
.h12 { grid-area: 4 / 6; }
.h24 { grid-area: 4 / 9; }
.data { grid-area: 5 / 2 / 15 / 12; display: grid; grid-template-rows: repeat(10, minmax(0, 1fr)); border-top: 1px solid #1a1a2a; }
.data thead, .data tbody { display: contents; }
.data th, .data td { padding: 0 1px; line-height: 13px; text-align: right; border-bottom: 1px solid #1d2233; border-right: 1px solid #4a4a55; overflow: hidden; }
.data th { text-align: left; font-weight: 400; padding-left: 2px; }
.data th:first-child, .data td:first-child { padding-right: 2px; }
.data .red { background: #fe6e69; }
.data .orange { background: #fd8f70; }
.data .yellow { background: #fee783; }
.data .pale { background: #efe283; }
.data .sand { background: #fdd07f; }
.data .lime { background: #9dcb7e; }
.data .moss { background: #82ba7c; }
.data .green { background: #5cb27a; }
.data .active { background: #5bb67d; }
.data .dgreen { background: #4a8d62; }
.data .dlime { background: #649c64; }
.data .dyellow { background: #ccb766; }
.data .dsand { background: #c5aa5f; }
.data .dorange { background: #cc7e58; }
.data .dred { background: #c9544f; }
.selection { grid-area: 6 / 6 / 15 / 7; border: 1px solid #1c7a45; pointer-events: none; }
.cursor { grid-area: 5 / 4 / 7 / 5; width: 16px; height: 16px; margin: 9px 0 0 13px; z-index: 1; }

.note { grid-area: 17 / 2 / 29 / 6; display: flex; flex-direction: column; justify-content: space-between; margin: 0 74px 6px 35px; padding: 2px 0 4px; background: linear-gradient(100deg, #55544a, #4b4940 50%, #3b3833); color: #fff; font-size: 25px; line-height: 34px; text-align: center; }
.note p { margin: 0; }

.sheetpic { grid-area: 17 / 5 / 35 / 11; display: flex; gap: 94px; margin: 0 97px 0 90px; padding-left: 31px; background: #fff; border: 1px solid #9a9a9a; border-left-color: #b9c8de; color: #444; font-family: "Liberation Serif", serif; }
.left { width: 250px; padding-top: 13px; }
.left h2 { margin: 0 0 2px; font: 700 8px/9px Lato, sans-serif; color: #222; text-align: center; }
.left sub { font-size: 5px; line-height: 5px; }
.values { width: 100%; border-collapse: collapse; table-layout: fixed; font-size: 7px; line-height: 8px; }
.values th { padding: 2px 0; border: solid #555; border-width: 1px 0; font-size: 7px; font-style: italic; }
.values tbody tr:first-child td { padding-top: 3px; }
.values td, .values th { text-align: left; }
.values td { padding: 0; height: 8px; }
.w37 { width: 37px; }
.w53 { width: 53px; }
.w40 { width: 40px; }
.w55 { width: 55px; }
.more-values { align-self: flex-start; width: 210px; margin-top: 32px; border-collapse: collapse; border-bottom: 1px solid #333; font-size: 9px; line-height: 11px; }
.more-values td { padding: 0; }
.more-values td:first-child { width: 49px; }
.more-values td:nth-child(2) { width: 67px; }
.more-values td:nth-child(3) { width: 53px; }

.chart { grid-area: 32 / 2 / 35 / 10; margin-right: 13px; background: #3d3d3e; color: #fff; }
.chart h2 { margin: 8px 0 7px; font: 700 12px/13px Lato, sans-serif; text-align: center; padding-right: 62px; }
.chart span { display: block; margin-left: 92px; width: 45px; border-right: 1px solid #777; font: 8px/10px Lato, sans-serif; color: #bbb; }
.vscroll { grid-area: 1 / 12 / 35 / 13; display: flex; flex-direction: column; align-items: flex-end; margin-left: 4px; padding: 3px 0; background: #f1f1f1; gap: 4px; }
.vscroll svg { width: 8px; height: 8px; }
.vscroll i { width: 6px; height: 40%; border-radius: 3px 0 0 3px; background: #6a6a6a; }
.vscroll svg:last-child { margin-top: auto; }

/* Sheet tabs */
.sheetbar { flex: 0 0 27px; display: flex; align-items: center; background: linear-gradient(90deg, #dedede, #ececec 60%); padding-left: 14px; }
.sheetbar button { width: 14px; margin-right: 13px; font-size: 15px; color: #666; }
.sheetbar .tab { width: 24px; height: 24px; margin: 0 30px 0 22px; border-radius: 3px; background: #fff; color: #222; font-size: 10px; font-weight: 600; text-decoration: underline #1c6b4c 2px; text-underline-offset: 4px; }
.sheetbar .add { width: 20px; font-size: 18px; color: #333; }
.hscroll { display: flex; align-items: center; width: 480px; height: 15px; margin-left: auto; margin-right: 10px; padding: 0 4px; background: #f6f6f6; }
.hscroll svg { width: 8px; height: 8px; }
.hscroll i { width: 314px; height: 7px; margin: 0 auto 0 42px; border-radius: 4px; background: #666; }

/* Status bar */
.status { flex: 0 0 18px; display: flex; align-items: center; padding-left: 5px; background: #f1f1f1; font-size: 8px; }
.status > svg, .view svg { width: 12px; height: 12px; }
.status > span:first-child { width: 40px; }
.status > svg + svg { margin: 0 3px 0 15px; }
.sums { display: flex; gap: 15px; margin-left: auto; margin-right: 14px; }
.view { width: 34px; height: 18px; }
.view.on { background: #d8d8d8; }
.pm { width: 12px; text-align: center; font-size: 10px; }
.status input { appearance: none; width: 85px; height: 1px; background: #555; }
.status input::-webkit-slider-thumb { appearance: none; width: 4px; height: 9px; background: #333; }
.pc { margin-left: 7px; width: 19px; overflow: hidden; }

.caption { position: absolute; left: 50%; bottom: 39px; transform: translateX(-50%); padding: 0 4px; background: #3b3b3b; color: #fff; font-size: 21px; line-height: 26px; }
.zoommark { position: absolute; right: 42px; bottom: 29px; font: 86px/86px "Liberation Sans", sans-serif; color: rgba(255, 255, 255, .45); -webkit-text-stroke: 1px #aaa; }
```
